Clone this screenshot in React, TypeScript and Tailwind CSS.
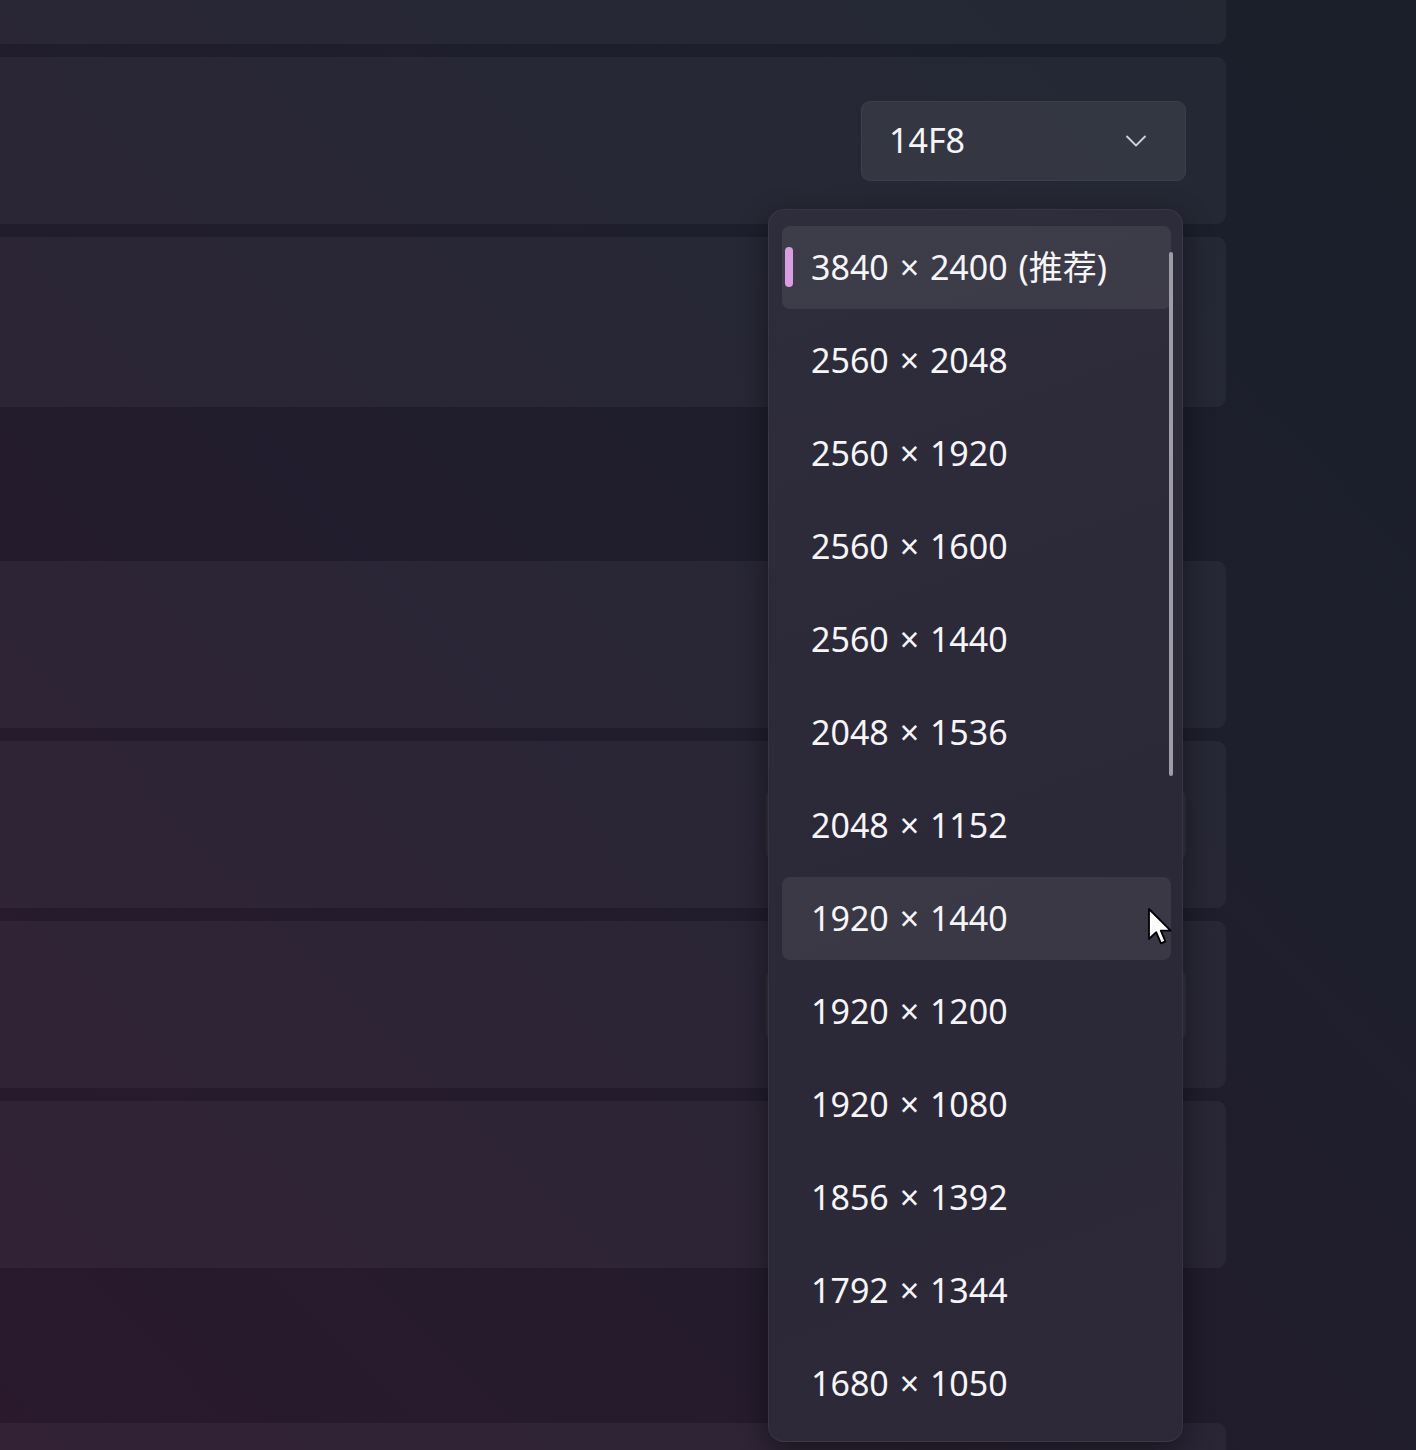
import { ChevronDown } from "lucide-react";

const resolutions = [
  "3840 × 2400 (推荐)",
  "2560 × 2048",
  "2560 × 1920",
  "2560 × 1600",
  "2560 × 1440",
  "2048 × 1536",
  "2048 × 1152",
  "1920 × 1440",
  "1920 × 1200",
  "1920 × 1080",
  "1856 × 1392",
  "1792 × 1344",
  "1680 × 1050",
];

const font = { fontFamily: '"Noto Sans", "Noto Sans CJK SC", sans-serif' };

export default function App() {
  return (
    <div
      className="relative h-[1450px] w-[1416px] overflow-hidden bg-[linear-gradient(to_top_right,#2a192c,#221c2d_40%,#1d1f2c_70%,#1a1f2a)] text-[#f6f6f8]"
      style={font}
    >
      <div className="-mt-[123px] -ml-[20px] mr-[190px] flex flex-col">
        <div className="flex flex-col gap-[13px]">
          <Card />
          <Card>
            <button className="flex h-[80px] w-[325px] items-center justify-between rounded-[9px] border border-white/[0.04] bg-white/[0.07] pl-[27px] pr-[31px] text-[34px]">
              <span>14F8</span>
              <ChevronDown className="size-[36px] text-[#d2d3da]" strokeWidth={1.2} />
            </button>
          </Card>
          <Card tall />
        </div>

        <div className="mt-[154px] flex flex-col gap-[13px]">
          <Card />
          <Card>
            <div className="h-[70px] w-[420px] rounded-[8px] bg-white/[0.05]" />
          </Card>
          <Card>
            <div className="h-[70px] w-[420px] rounded-[8px] bg-white/[0.05]" />
          </Card>
          <Card />
        </div>

        <div className="mt-[155px] flex flex-col gap-[13px]">
          <Card />
        </div>
      </div>

      <ResolutionMenu />

      <svg
        className="absolute left-[1147px] top-[907px]"
        width="26"
        height="40"
        viewBox="0 0 13 20"
      >
        <path
          d="M1 1 L1 16 L4.6 12.6 L7 18.2 L9.2 17.2 L6.9 11.8 L11.8 11.8 Z"
          fill="white"
          stroke="black"
          strokeWidth="0.9"
          strokeLinejoin="round"
        />
      </svg>
    </div>
  );
}

function Card({ children, tall }: { children?: React.ReactNode; tall?: boolean }) {
  return (
    <div
      className={`flex ${tall ? "h-[170px]" : "h-[167px]"} items-center justify-end rounded-[9px] bg-white/[0.045] pr-[40px]`}
    >
      {children}
    </div>
  );
}

function ResolutionMenu() {
  return (
    <div className="absolute left-[768px] top-[209px] w-[415px] rounded-[16px] border border-white/[0.06] bg-[linear-gradient(160deg,#2e2d3b,#2b2837_60%,#2d2938)] shadow-[0_10px_30px_rgba(0,0,0,0.45)]">
      <div className="relative flex flex-col gap-[10px] py-[16px] pl-[13px] pr-[11px]">
        {resolutions.map((r, i) => (
          <div
            key={r}
            className={`relative flex h-[83px] items-center rounded-[8px] pl-[29px] text-[34px] [word-spacing:2px] ${
              i === 0 ? "bg-white/[0.07]" : i === 7 ? "bg-white/[0.08]" : ""
            }`}
          >
            {i === 0 && (
              <span className="absolute left-[3px] top-[21px] h-[40px] w-[8px] rounded-full bg-[#d99de3]" />
            )}
            {r}
          </div>
        ))}
        <span className="absolute right-[9px] top-[42px] h-[524px] w-[4px] rounded-full bg-[#9e9da7]" />
      </div>
    </div>
  );
}
